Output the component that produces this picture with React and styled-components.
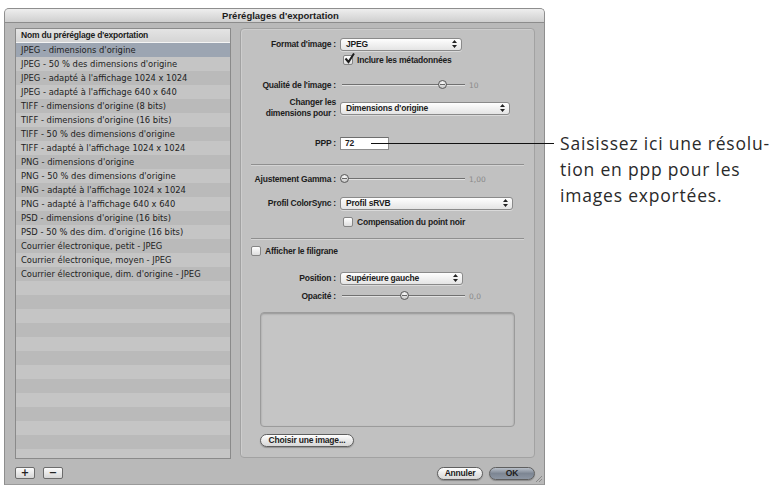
import React from 'react';
import styled, { createGlobalStyle } from 'styled-components';

const GlobalStyle = createGlobalStyle`
  html, body { margin: 0; padding: 0; background: #fff; }
  body { font-family: "DejaVu Sans", "Liberation Sans", sans-serif; }
  * { box-sizing: border-box; }
`;

const boldFont = `
  font-family: "Liberation Sans", Arial, sans-serif;
  font-weight: bold;
  font-size: 8.5px;
  letter-spacing: -0.2px;
  color: #1c1c1c;
`;

const Stage = styled.div`
  position: relative;
  width: 779px;
  height: 490px;
  padding: 8px 0 0 4px;
  display: flex;
  align-items: flex-start;
`;

const Window = styled.div`
  position: relative;
  width: 541px;
  height: 477px;
  border: 1px solid #8e8e8e;
  border-bottom-color: #9a9a9a;
  border-radius: 5px 5px 0 0;
  background: #b9b9b9;
  display: flex;
  flex-direction: column;
`;

const TitleBar = styled.div`
  height: 14px;
  border-bottom: 1px solid #8c8c8c;
  border-radius: 4px 4px 0 0;
  background: linear-gradient(#eeeeee, #cfcfcf);
  ${boldFont}
  font-size: 9.5px;
  letter-spacing: 0;
  text-align: center;
  line-height: 13px;
  padding-left: 12px;
`;

const Body = styled.div`
  flex: 1;
  display: grid;
  grid-template-columns: 216px 295px;
  grid-template-rows: 431px 1fr;
  column-gap: 9px;
  padding: 5px 9px 0 10px;
`;

const List = styled.div`
  border: 1px solid #8a8a8a;
  background: #bdbdbd;
  display: flex;
  flex-direction: column;
  overflow: hidden;
`;

const ListHeader = styled.div`
  height: 14px;
  flex: none;
  background: linear-gradient(#e4e4e4, #d5d5d5);
  border-bottom: 1px solid #f4f4f4;
  ${boldFont}
  padding-left: 5px;
  line-height: 13px;
`;

const ListBody = styled.div`
  flex: 1;
  background: repeating-linear-gradient(to bottom, #bababa 0 14px, #c5c5c5 14px 28px);
`;

const ListRow = styled.div`
  height: 14px;
  line-height: 14px;
  padding-left: 5px;
  font-size: 8.4px;
  color: #222;
  white-space: nowrap;
  background: ${(p) => (p.$selected ? '#9ca5b2' : 'transparent')};
`;

const Panel = styled.div`
  height: 430px;
  border: 1px solid #a2a2a2;
  border-radius: 4px;
  background: #c1c1c1;
  box-shadow: inset 1px 1px 0 #cdcdcd;
  display: flex;
  flex-direction: column;
`;

const Row = styled.div`
  display: flex;
  align-items: center;
  height: ${(p) => p.$h}px;
  margin-top: ${(p) => p.$mt}px;
  padding-left: ${(p) => p.$indent || 0}px;
`;

const Label = styled.div`
  width: 97px;
  flex: none;
  text-align: right;
  ${boldFont}
  line-height: 11px;
  padding-right: 2px;
`;

const PopUp = styled.div`
  margin-left: 2px;
  width: ${(p) => p.$w}px;
  height: 13px;
  border: 1px solid #8a8a8a;
  border-radius: 3px;
  background: linear-gradient(#fefefe, #e4e4e4);
  box-shadow: 0 1px 0 rgba(255, 255, 255, 0.4);
  display: flex;
  align-items: center;
  justify-content: space-between;
  padding: 0 4px 0 5px;
  ${boldFont}
`;

const TextField = styled.div`
  margin-left: 2px;
  width: 49px;
  height: 13px;
  border: 1px solid #8d8d8d;
  border-top-color: #6e6e6e;
  background: #fff;
  ${boldFont}
  padding-left: 4px;
  line-height: 11px;
`;

const Check = styled.div`
  width: 10px;
  height: 10px;
  flex: none;
  border: 1px solid #858585;
  border-radius: 2px;
  background: linear-gradient(#ffffff, #dedede);
  position: relative;
`;

const CheckText = styled.span`
  margin-left: 4px;
  ${boldFont}
`;

const SliderTrack = styled.div`
  position: relative;
  margin-left: 4px;
  width: 123px;
  height: 2px;
  border-top: 1px solid #707070;
  border-bottom: 1px solid #e2e2e2;
  background: #a8a8a8;
`;

const Knob = styled.div`
  position: absolute;
  top: -5px;
  left: ${(p) => p.$pos}%;
  margin-left: -4px;
  width: 9px;
  height: 9px;
  border-radius: 50%;
  border: 1px solid #5a5a5a;
  background: radial-gradient(circle at 50% 30%, #fafafa, #b8b8b8);
  &::after {
    content: '';
    position: absolute;
    left: 1px;
    right: 1px;
    top: 3px;
    height: 1px;
    background: #666;
  }
`;

const SliderValue = styled.span`
  margin-left: 4px;
  font-size: 7.5px;
  color: #8a8a8a;
`;

const Separator = styled.div`
  margin: ${(p) => p.$mt}px 10px 0 10px;
  height: 2px;
  border-top: 1px solid #8f8f8f;
  border-bottom: 1px solid #d4d4d4;
`;

const ImageWell = styled.div`
  margin: 10px 0 0 19px;
  width: 255px;
  height: 115px;
  border: 1px solid #9b9b9b;
  border-radius: 4px;
  background: #c5c5c5;
  box-shadow: inset 0 1px 2px rgba(0, 0, 0, 0.25);
`;

const PillButton = styled.div`
  width: ${(p) => p.$w}px;
  height: 13px;
  border: 1px solid #5f5f5f;
  border-radius: 7px;
  background: ${(p) =>
    p.$default
      ? 'linear-gradient(#b9c0c9, #7d8693 50%, #8d96a3)'
      : 'linear-gradient(#ffffff, #e9e9e9 50%, #d7d7d7)'};
  ${boldFont}
  text-align: center;
  line-height: 11px;
  box-shadow: 0 1px 1px rgba(0, 0, 0, 0.25);
`;

const ChooseRow = styled.div`
  margin: 7px 0 0 19px;
`;

const Footer = styled.div`
  display: flex;
  align-items: flex-start;
  gap: ${(p) => p.$gap}px;
  justify-content: ${(p) => (p.$right ? 'flex-end' : 'flex-start')};
  padding-top: 8px;
`;

const SquareButton = styled.div`
  width: 20px;
  height: 12px;
  border: 1px solid #6c6c6c;
  border-radius: 2px;
  background: linear-gradient(#fbfbfb, #d6d6d6);
  font-size: 10px;
  font-weight: bold;
  color: #222;
  text-align: center;
  line-height: 10px;
`;

const Grip = styled.svg`
  position: absolute;
  right: 1px;
  bottom: 1px;
`;

const Callout = styled.div`
  margin: 122px 0 0 15px;
  font-family: "Open Sans", "Liberation Sans", sans-serif;
  font-size: 17.5px;
  letter-spacing: 0.8px;
  line-height: 26px;
  color: #2a2a2a;
  white-space: nowrap;
`;

const Leader = styled.div`
  position: absolute;
  left: 371px;
  top: 143px;
  width: 183px;
  height: 1px;
  background: #111;
`;

const Arrows = () => (
  <svg width="5" height="8" viewBox="0 0 5 8">
    <path d="M2.5 0 L5 3 L0 3 Z M2.5 8 L5 5 L0 5 Z" fill="#222" />
  </svg>
);

const Tick = () => (
  <svg width="11" height="11" viewBox="0 0 11 11" style={{ position: 'absolute', left: 0, top: -3 }}>
    <path d="M1.5 5.5 L4.5 9 L10 0.5" stroke="#1d1d1d" strokeWidth="2" fill="none" />
  </svg>
);

const presets = [
  "JPEG - dimensions d'origine",
  "JPEG - 50 % des dimensions d'origine",
  "JPEG - adapté à l'affichage 1024 x 1024",
  "JPEG - adapté à l'affichage 640 x 640",
  "TIFF - dimensions d'origine (8 bits)",
  "TIFF - dimensions d'origine (16 bits)",
  "TIFF - 50 % des dimensions d'origine",
  "TIFF - adapté à l'affichage 1024 x 1024",
  "PNG - dimensions d'origine",
  "PNG - 50 % des dimensions d'origine",
  "PNG - adapté à l'affichage 1024 x 1024",
  "PNG - adapté à l'affichage 640 x 640",
  "PSD - dimensions d'origine (16 bits)",
  "PSD - 50 % des dim. d'origine (16 bits)",
  "Courrier électronique, petit - JPEG",
  "Courrier électronique, moyen - JPEG",
  "Courrier électronique, dim. d'origine - JPEG",
];

const Slider = ({ pos, value }) => (
  <>
    <SliderTrack>
      <Knob $pos={pos} />
    </SliderTrack>
    <SliderValue>{value}</SliderValue>
  </>
);

const App = () => {
  return (
    <Stage>
      <GlobalStyle />
      <Window>
        <TitleBar>Préréglages d'exportation</TitleBar>
        <Body>
          <List>
            <ListHeader>Nom du préréglage d'exportation</ListHeader>
            <ListBody>
              {presets.map((name, i) => (
                <ListRow key={name} $selected={i === 0}>{name}</ListRow>
              ))}
            </ListBody>
          </List>

          <Panel>
            <Row $h={14} $mt={8}>
              <Label>Format d'image :</Label>
              <PopUp $w={122}>JPEG<Arrows /></PopUp>
            </Row>
            <Row $h={12} $mt={3} $indent={102}>
              <Check><Tick /></Check>
              <CheckText>Inclure les métadonnées</CheckText>
            </Row>
            <Row $h={12} $mt={13}>
              <Label>Qualité de l'image :</Label>
              <Slider pos={81} value="10" />
            </Row>
            <Row $h={24} $mt={5}>
              <Label>Changer les<br />dimensions pour :</Label>
              <PopUp $w={170}>Dimensions d'origine<Arrows /></PopUp>
            </Row>
            <Row $h={14} $mt={16}>
              <Label>PPP :</Label>
              <TextField>72</TextField>
            </Row>
            <Separator $mt={14} />
            <Row $h={12} $mt={7}>
              <Label>Ajustement Gamma :</Label>
              <Slider pos={2} value="1,00" />
            </Row>
            <Row $h={14} $mt={11}>
              <Label>Profil ColorSync :</Label>
              <PopUp $w={173}>Profil sRVB<Arrows /></PopUp>
            </Row>
            <Row $h={12} $mt={6} $indent={102}>
              <Check />
              <CheckText>Compensation du point noir</CheckText>
            </Row>
            <Separator $mt={10} />
            <Row $h={12} $mt={5} $indent={10}>
              <Check />
              <CheckText>Afficher le filigrane</CheckText>
            </Row>
            <Row $h={14} $mt={14}>
              <Label>Position :</Label>
              <PopUp $w={123}>Supérieure gauche<Arrows /></PopUp>
            </Row>
            <Row $h={12} $mt={5}>
              <Label>Opacité :</Label>
              <Slider pos={50} value="0,0" />
            </Row>
            <ImageWell />
            <ChooseRow>
              <PillButton $w={94}>Choisir une image...</PillButton>
            </ChooseRow>
          </Panel>

          <Footer $gap={8}>
            <SquareButton>+</SquareButton>
            <SquareButton>−</SquareButton>
          </Footer>
          <Footer $right $gap={6}>
            <PillButton $w={46}>Annuler</PillButton>
            <PillButton $w={46} $default>OK</PillButton>
          </Footer>
        </Body>
        <Grip width="9" height="9" viewBox="0 0 9 9">
          <path d="M8 2 L2 8 M8 5 L5 8" stroke="#8a8a8a" strokeWidth="1" />
        </Grip>
      </Window>
      <Callout>
        Saisissez ici une résolu-<br />
        tion en ppp pour les<br />
        images exportées.
      </Callout>
      <Leader />
    </Stage>
  );
};

export default App;
